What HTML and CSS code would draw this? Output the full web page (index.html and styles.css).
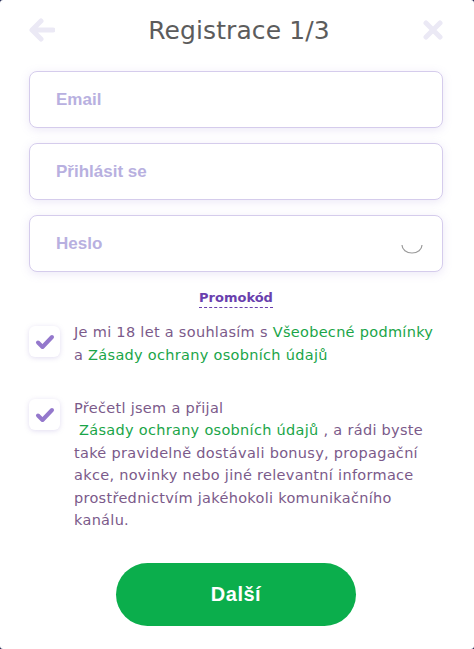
FILE: index.html
```html
<!DOCTYPE html>
<html lang="cs">
<head>
<meta charset="utf-8">
<title>Registrace 1/3</title>
<link rel="stylesheet" href="styles.css">
</head>
<body>
<div class="modal">
  <header class="head">
    <svg class="icon back" width="26" height="24" viewBox="0 0 26 24"><path d="M24 12H4M12 3L3 12l9 9" fill="none" stroke="#ebe9f5" stroke-width="5" stroke-linecap="round" stroke-linejoin="round"/></svg>
    <h1 class="title">Registrace 1/3</h1>
    <svg class="icon close" width="20" height="20" viewBox="0 0 20 20"><path d="M3 3l14 14M17 3L3 17" fill="none" stroke="#ebe9f5" stroke-width="5" stroke-linecap="round"/></svg>
  </header>
  <form class="form">
    <div class="field"><span class="ph">Email</span></div>
    <div class="field"><span class="ph">Přihlásit se</span></div>
    <div class="field"><span class="ph">Heslo</span>
      <svg class="spin" width="24" height="12" viewBox="0 0 24 12"><path d="M2 3a10 8 0 0 0 20 0" fill="none" stroke="#9a9a9a" stroke-width="1.2"/></svg>
    </div>
    <div class="promo"><span class="promo-link">Promokód</span></div>
    <div class="check-row first">
      <span class="box"><svg width="20" height="16" viewBox="0 0 20 16"><path d="M3 8.5l4.5 4.5L17 3" fill="none" stroke="#9478cc" stroke-width="4" stroke-linecap="round" stroke-linejoin="round"/></svg></span>
      <p class="check-text">Je mi 18 let a souhlasím s <span class="link">Všeobecné podmínky</span> a <span class="link">Zásady ochrany osobních údajů</span></p>
    </div>
    <div class="check-row second">
      <span class="box"><svg width="20" height="16" viewBox="0 0 20 16"><path d="M3 8.5l4.5 4.5L17 3" fill="none" stroke="#9478cc" stroke-width="4" stroke-linecap="round" stroke-linejoin="round"/></svg></span>
      <p class="check-text long">Přečetl jsem a přijal<br><span class="link indent">Zásady ochrany osobních údajů</span> , a rádi byste také pravidelně dostávali bonusy, propagační akce, novinky nebo jiné relevantní informace prostřednictvím jakéhokoli komunikačního kanálu.</p>
    </div>
    <div class="actions"><button type="button" class="next">Další</button></div>
  </form>
</div>
</body>
</html>
```

FILE: styles.css
```css
html, body {
  margin: 0;
  padding: 0;
  background: #1d2350;
}
.modal {
  width: 474px;
  height: 649px;
  background: #ffffff;
  border-radius: 3px;
  overflow: hidden;
  font-family: "DejaVu Sans", sans-serif;
}
.head {
  height: 62px;
  display: flex;
  align-items: center;
  justify-content: space-between;
  padding: 0 31px 0 29px;
  box-sizing: border-box;
}
.icon { display: block; }
.back { margin-top: -2px; }
.close { margin-top: -2px; }
.title {
  margin: 0;
  font-weight: 400;
  font-size: 25px;
  color: #5c5c5c;
  letter-spacing: 0.1px;
  margin-top: -2px;
}
.form {
  padding: 9px 31px 0 29px;
  margin: 0;
}
.field {
  height: 57px;
  box-sizing: border-box;
  border: 1px solid #d5ccec;
  border-radius: 8px;
  background: #fff;
  box-shadow: 0 2px 10px rgba(150, 130, 210, 0.18);
  display: flex;
  align-items: center;
  justify-content: space-between;
  padding: 0 18px 0 26px;
  margin-bottom: 15px;
}
.ph {
  font-family: "Liberation Sans", Arial, sans-serif;
  font-weight: 700;
  font-size: 17px;
  color: #b8b0e0;
}
.spin { margin-top: 8px; }
.promo {
  text-align: center;
  margin-top: 2px;
  height: 24px;
}
.promo-link {
  font-size: 13px;
  font-weight: 700;
  color: #6a3fae;
  border-bottom: 1px dashed #6a3fae;
  padding-bottom: 2px;
}
.check-row {
  display: flex;
  align-items: flex-start;
  gap: 14px;
}
.check-row.first { margin-top: 15px; }
.check-row.second { margin-top: 32px; }
.box {
  flex: 0 0 31px;
  height: 31px;
  border-radius: 6px;
  background: #fff;
  box-shadow: 0 1px 5px rgba(140, 120, 200, 0.25);
  display: flex;
  align-items: center;
  justify-content: center;
}
.check-text {
  margin: -5px 0 0 0;
  font-size: 14.5px;
  letter-spacing: 0.3px;
  line-height: 23px;
  color: #7b5a8a;
}
.check-text.long { line-height: 22.4px; margin-top: -2px; }
.link { color: #1aa548; }
.indent { margin-left: 5px; }
.actions {
  display: flex;
  justify-content: center;
  margin-top: 32px;
}
.next {
  width: 240px;
  height: 63px;
  border: none;
  border-radius: 32px;
  background: #0bae4c;
  color: #fff;
  font-family: "Liberation Sans", Arial, sans-serif;
  font-weight: 700;
  font-size: 20px;
  letter-spacing: 0.5px;
}
```
